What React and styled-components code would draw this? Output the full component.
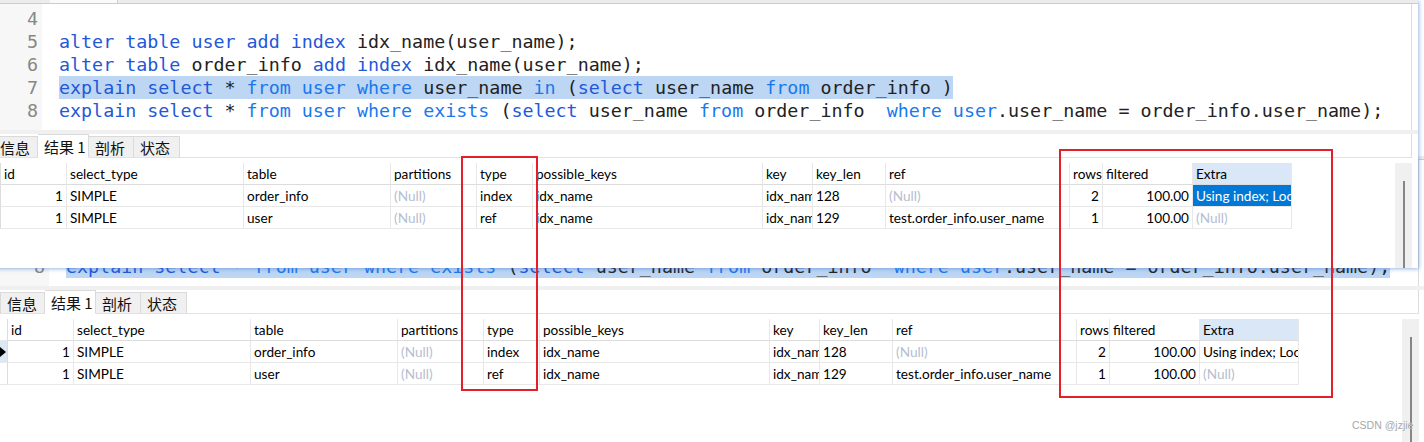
import React from 'react';
import styled, { createGlobalStyle } from 'styled-components';

const GlobalStyle = createGlobalStyle`
  html, body { margin: 0; padding: 0; background: #fff; }
  body {
    width: 1424px; height: 442px; overflow: hidden;
    font-family: "Noto Sans CJK SC", "Noto Sans", sans-serif;
  }
  * { box-sizing: border-box; }
`;

const Desktop = styled.div`
  position: relative;
  width: 1424px;
  height: 442px;
  overflow: hidden;
  background: #fff;
`;

const WindowFrame = styled.div`
  position: absolute;
  left: ${p => p.$x}px;
  top: ${p => p.$y}px;
  width: 1425px;
  height: ${p => p.$h}px;
  z-index: ${p => p.$z};
  display: flex;
  flex-direction: column;
  background: #fff;
  overflow: hidden;
  box-shadow: ${p => (p.$shadow ? '1px 1px 4px rgba(70, 120, 210, 0.55)' : 'none')};
`;

const TopStrip = styled.div`
  height: 4px;
  flex: none;
  display: flex;
  background: #ececec;
  border-bottom: 1px solid #c4cedb;
`;

const StripTab = styled.div`
  margin-left: 57px;
  width: 68px;
  height: 3px;
  background: #fafafa;
  border-right: 1px solid #d0d0d0;
`;

const Editor = styled.div`
  height: 126px;
  flex: none;
  display: flex;
  margin-right: 6px;
  border-right: 1px solid #dcdcdc;
  font-family: "DejaVu Sans Mono", "Liberation Mono", monospace;
  font-size: 18.33px;
`;

const Gutter = styled.div`
  width: 49px;
  flex: none;
  padding: 3px 4px 0 0;
  background: #f7f7f7;
  color: #878787;
  text-align: right;
`;

const Code = styled.div`
  flex: 1;
  padding: 3px 0 0 17px;
  overflow: hidden;
`;

const Line = styled.div`
  height: 23px;
  line-height: 23px;
  white-space: pre;
`;

const LineText = styled.span`
  display: inline-block;
  height: 23px;
  background: ${p => (p.$sel ? '#bcd6f4' : 'transparent')};
`;

const Tok = styled.span`
  color: ${p => (p.$k === 'k' ? '#1f58d8' : p.$k === 'b' ? '#1a78ee' : '#222')};
`;

const Separator = styled.div`
  height: 4px;
  flex: none;
  background: #f0f0f0;
`;

const TabBar = styled.div`
  height: 24px;
  flex: none;
  display: flex;
  align-items: flex-end;
  margin-right: 6px;
  border-bottom: 1px solid #e2e2e2;
  border-right: 1px solid #dcdcdc;
`;

const Tab = styled.div`
  width: ${p => p.$w}px;
  height: ${p => (p.$active ? 24 : 22)}px;
  padding: 0 0 0 6px;
  margin-bottom: -1px;
  display: flex;
  align-items: center;
  font-size: 15px;
  color: #111;
  white-space: nowrap;
  background: ${p => (p.$active ? '#fff' : '#f0f0f0')};
  border: 1px solid #dadada;
  border-bottom: ${p => (p.$active ? '1px solid #fff' : '1px solid #e2e2e2')};
  border-left: ${p => (p.$first ? '1px solid #dadada' : 'none')};
`;

const ResultArea = styled.div`
  flex: 1;
  display: flex;
  padding-top: 5px;
  margin-right: 6px;
`;

const Grid = styled.div`
  display: grid;
  grid-template-columns: 8px 66px 177px 147px 86px 56px 230px 50px 73px 184px 33px 90px 99px;
  grid-auto-rows: 22px;
  align-content: start;
  font-family: Lato, "Noto Sans CJK SC", sans-serif;
  font-size: 13.6px;
  color: #000;
`;

const Cell = styled.div`
  padding: 1px ${p => (p.$clip ? 0 : 3)}px 0 3px;
  line-height: 20px;
  white-space: nowrap;
  overflow: hidden;
  text-align: ${p => (p.$right ? 'right' : 'left')};
  border-right: 1px solid #e8e8e8;
  border-bottom: 1px solid ${p => (p.$head ? '#dcdcdc' : '#e8e8e8')};
  background: ${p => p.$bg || 'transparent'};
  color: ${p => p.$color || '#000'};
`;

const RowHead = styled.div`
  border-right: 1px solid #dcdcdc;
  border-bottom: 1px solid #e8e8e8;
  background: ${p => (p.$sel ? '#dbe8f6' : '#fff')};
  display: flex;
  align-items: center;
`;

const Arrow = styled.div`
  width: 0;
  height: 0;
  border-top: 5px solid transparent;
  border-bottom: 5px solid transparent;
  border-left: 6px solid #000;
`;

const ScrollTrack = styled.div`
  margin-left: auto;
  width: 17px;
  flex: none;
  background: #f0f0f0;
  padding: 18px 0 0 8px;
  display: flex;
`;

const Thumb = styled.div`
  width: 2px;
  background: #868686;
`;

const Annotation = styled.div`
  position: absolute;
  left: ${p => p.$x}px;
  top: ${p => p.$y}px;
  width: ${p => p.$w}px;
  height: ${p => p.$h}px;
  border: 2px solid #e41f2b;
  z-index: 10;
  pointer-events: none;
`;

const Watermark = styled.div`
  position: absolute;
  left: 1352px;
  top: 419px;
  z-index: 11;
  font-family: "Liberation Sans", Arial, sans-serif;
  font-size: 10.5px;
  color: #a8a8a8;
  text-shadow: 0 0 1px #fff;
  white-space: nowrap;
`;

const LINES = [
  { n: 4, t: [] },
  { n: 5, t: [['alter table user add index', 'k'], [' idx_name(user_name);', 'd']] },
  { n: 6, t: [['alter table', 'k'], [' order_info ', 'd'], ['add index', 'k'], [' idx_name(user_name);', 'd']] },
  {
    n: 7,
    t: [
      ['explain select', 'k'], [' * ', 'd'], ['from user where', 'b'], [' user_name ', 'd'], ['in', 'b'],
      [' (', 'd'], ['select', 'k'], [' user_name ', 'd'], ['from', 'b'], [' order_info )', 'd'],
    ],
  },
  {
    n: 8,
    t: [
      ['explain select', 'k'], [' * ', 'd'], ['from user where exists', 'b'], [' (', 'd'], ['select', 'k'],
      [' user_name ', 'd'], ['from', 'b'], [' order_info  ', 'd'], ['where user', 'b'],
      ['.user_name = order_info.user_name);', 'd'],
    ],
  },
];

const HEADERS = ['id', 'select_type', 'table', 'partitions', 'type', 'possible_keys', 'key', 'key_len', 'ref', 'rows', 'filtered', 'Extra'];
const RIGHT = [true, false, false, false, false, false, false, false, false, true, true, false];
const NULL = '(Null)';

const ROWS = [
  ['1', 'SIMPLE', 'order_info', NULL, 'index', 'idx_name', 'idx_name', '128', NULL, '2', '100.00', 'Using index; LooseScan'],
  ['1', 'SIMPLE', 'user', NULL, 'ref', 'idx_name', 'idx_name', '129', 'test.order_info.user_name', '1', '100.00', NULL],
];

const TABS = [
  { label: '信息', w: 45 },
  { label: '结果 1', w: 51, active: true },
  { label: '剖析', w: 45 },
  { label: '状态', w: 46 },
];

function NavicatWindow({ x, y, h, z, shadow, selLine, selectedCell, arrow }) {
  return (
    <WindowFrame $x={x} $y={y} $h={h} $z={z} $shadow={shadow}>
      <TopStrip>
        <StripTab />
      </TopStrip>
      <Editor>
        <Gutter>
          {LINES.map(l => (
            <Line key={l.n}>{l.n}</Line>
          ))}
        </Gutter>
        <Code>
          {LINES.map(l => (
            <Line key={l.n}>
              <LineText $sel={l.n === selLine}>
                {l.t.map((tk, i) => (
                  <Tok key={i} $k={tk[1]}>{tk[0]}</Tok>
                ))}
              </LineText>
            </Line>
          ))}
        </Code>
      </Editor>
      <Separator />
      <TabBar>
        {TABS.map((t, i) => (
          <Tab key={t.label} $w={t.w} $active={t.active} $first={i === 0}>{t.label}</Tab>
        ))}
      </TabBar>
      <ResultArea>
        <Grid>
          <RowHead />
          {HEADERS.map(hd => (
            <Cell key={hd} $head $bg={hd === 'Extra' ? '#d9e7f6' : undefined}>{hd}</Cell>
          ))}
          {ROWS.map((r, ri) => (
            <React.Fragment key={ri}>
              <RowHead $sel={ri === 0}>{arrow && ri === 0 ? <Arrow /> : null}</RowHead>
              {r.map((v, ci) => {
                const isSel = selectedCell && ri === 0 && ci === 11;
                const isNull = v === NULL;
                return (
                  <Cell
                    key={ci}
                    $right={RIGHT[ci]}
                    $clip={ci === 6 || ci === 11}
                    $bg={isSel ? '#0078d7' : undefined}
                    $color={isSel ? '#fff' : isNull ? '#b6bdd0' : undefined}
                  >
                    {v}
                  </Cell>
                );
              })}
            </React.Fragment>
          ))}
        </Grid>
        <ScrollTrack>
          <Thumb />
        </ScrollTrack>
      </ResultArea>
    </WindowFrame>
  );
}

export default function App() {
  return (
    <>
      <GlobalStyle />
      <Desktop>
        <NavicatWindow x={0} y={156} h={286} z={1} selLine={8} arrow />
        <NavicatWindow x={-7} y={0} h={268} z={2} shadow selLine={7} selectedCell />
        <Annotation $x={461} $y={156} $w={77} $h={235} />
        <Annotation $x={1059} $y={149} $w={274} $h={249} />
        <Watermark>CSDN @jzjie</Watermark>
      </Desktop>
    </>
  );
}
